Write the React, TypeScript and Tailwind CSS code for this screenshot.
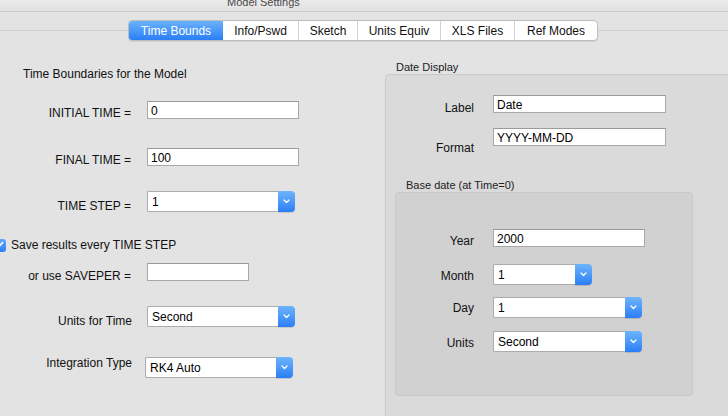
import React from "react";

function TextField({ className, value }: { className: string; value?: string }) {
  return (
    <div
      className={`h-[18px] bg-white border border-[#a9a9a9] border-t-[#9a9a9a] pl-[3px] text-[12px] leading-[18px] text-black ${className}`}
    >
      {value}
    </div>
  );
}

function Chevron() {
  return (
    <svg width="7" height="5" viewBox="0 0 7 5" fill="none">
      <path d="M1 1 L3.5 3.5 L6 1" stroke="white" strokeWidth="1.3" strokeLinecap="round" strokeLinejoin="round" />
    </svg>
  );
}

function Combo({ className, value }: { className: string; value: string }) {
  return (
    <div className={`flex h-[21px] ${className}`}>
      <div className="flex-1 bg-white border-y border-l border-[#acacac] rounded-l-[2px] pl-[4px] text-[12px] leading-[21px] text-black">
        {value}
      </div>
      <div className="w-[17px] rounded-r-[4px] bg-gradient-to-b from-[#6db4fb] to-[#2b7ef6] flex items-center justify-center shadow-[0_1px_0_rgba(0,0,0,0.12)]">
        <Chevron />
      </div>
    </div>
  );
}

const tabs = [
  { label: "Time Bounds", w: "w-[94px]", active: true },
  { label: "Info/Pswd", w: "w-[75px]" },
  { label: "Sketch", w: "w-[59px]" },
  { label: "Units Equiv", w: "w-[83px]" },
  { label: "XLS Files", w: "w-[74px]" },
  { label: "Ref Modes", w: "w-[83px]" },
];

export default function App() {
  return (
    <div
      className="w-[728px] h-[416px] overflow-hidden bg-[#e3e3e3] text-[#111]"
      style={{ fontFamily: '"Liberation Sans", Arial, sans-serif' }}
    >
      {/* title bar */}
      <div className="h-[12px] border-b border-[#cbcbcb] bg-gradient-to-b from-[#ebebeb] to-[#e2e2e2] overflow-hidden flex">
        <div className="ml-[227px] -mt-[4px] text-[11px] leading-[12px] text-[#4a4a4a]">Model Settings</div>
      </div>

      {/* tabs */}
      <div className="flex items-center pt-[8px]">
        <div className="w-[128px] h-px bg-[#d0d0d0]" />
        <div className="flex h-[21px] rounded-[4px] border border-[#bdbdbd] bg-white overflow-hidden shadow-[0_1px_1px_rgba(0,0,0,0.08)]">
          {tabs.map((t, i) => (
            <div
              key={t.label}
              className={`${t.w} flex items-center justify-center text-[12px] leading-[14px] ${
                t.active
                  ? "bg-gradient-to-b from-[#6ab2fb] to-[#2a7ef5] text-white"
                  : "text-[#111]"
              } ${i > 1 ? "border-l border-[#d3d3d3]" : ""}`}
            >
              {t.label}
            </div>
          ))}
        </div>
        <div className="flex-1 h-px bg-[#d0d0d0]" />
      </div>

      {/* main */}
      <div className="flex">
        {/* left column */}
        <div className="w-[385px] shrink-0 flex flex-col text-[12px] leading-[14px]">
          <div className="mt-[26px] ml-[23px]">Time Boundaries for the Model</div>

          <div className="mt-[20px] h-[18px] flex items-start">
            <div className="w-[131px] text-right mt-[5px]">INITIAL TIME =</div>
            <TextField className="ml-[16px] w-[152px]" value="0" />
          </div>

          <div className="mt-[29px] h-[18px] flex items-start">
            <div className="w-[131px] text-right mt-[5px]">FINAL TIME =</div>
            <TextField className="ml-[16px] w-[152px]" value="100" />
          </div>

          <div className="mt-[25px] h-[21px] flex items-start">
            <div className="w-[131px] text-right mt-[8px]">TIME STEP =</div>
            <Combo className="ml-[16px] w-[148px]" value="1" />
          </div>

          <div className="mt-[26px] h-[14px] flex items-center">
            <div className="-ml-[7px] w-[13px] h-[13px] rounded-[3px] bg-gradient-to-b from-[#5ea9fa] to-[#2b7ef5] flex items-center justify-center">
              <svg width="9" height="8" viewBox="0 0 9 8" fill="none">
                <path d="M1.5 4.2 L3.6 6.3 L7.6 1.5" stroke="white" strokeWidth="1.6" strokeLinecap="round" strokeLinejoin="round" />
              </svg>
            </div>
            <div className="ml-[5px]">Save results every TIME STEP</div>
          </div>

          <div className="mt-[11px] h-[18px] flex items-start">
            <div className="w-[131px] text-right mt-[6px]">or use SAVEPER =</div>
            <TextField className="ml-[16px] w-[102px]" />
          </div>

          <div className="mt-[25px] h-[21px] flex items-start">
            <div className="w-[132px] text-right mt-[8px]">Units for Time</div>
            <Combo className="ml-[15px] w-[148px]" value="Second" />
          </div>

          <div className="mt-[30px] h-[21px] flex items-start">
            <div className="w-[132px] text-right -mt-[1px]">Integration Type</div>
            <Combo className="ml-[13px] w-[148px]" value="RK4 Auto" />
          </div>
        </div>

        {/* right column */}
        <div className="flex-1 min-w-0 flex flex-col">
          <div className="mt-[20px] ml-[11px] text-[11px] leading-[13px] text-[#222]">Date Display</div>
          <div className="w-[360px] h-[360px] shrink-0 bg-[#dadada] border border-[#cacaca] rounded-tl-[4px] flex flex-col text-[12px] leading-[14px]">
            <div className="mt-[20px] h-[18px] flex items-start">
              <div className="w-[88px] text-right mt-[6px]">Label</div>
              <TextField className="ml-[19px] w-[173px]" value="Date" />
            </div>
            <div className="mt-[15px] h-[18px] flex items-start">
              <div className="w-[88px] text-right mt-[13px]">Format</div>
              <TextField className="ml-[19px] w-[173px]" value="YYYY-MM-DD" />
            </div>

            <div className="mt-[33px] ml-[20px] text-[11px] leading-[13px] text-[#222]">Base date (at Time=0)</div>
            <div className="ml-[9px] w-[298px] h-[204px] bg-[#d1d1d1] border border-[#c8c8c8] rounded-[4px] flex flex-col">
              <div className="mt-[36px] h-[18px] flex items-start">
                <div className="w-[78px] text-right mt-[5px]">Year</div>
                <TextField className="ml-[19px] w-[152px]" value="2000" />
              </div>
              <div className="mt-[17px] h-[21px] flex items-start">
                <div className="w-[78px] text-right mt-[5px]">Month</div>
                <Combo className="ml-[19px] w-[99px]" value="1" />
              </div>
              <div className="mt-[12px] h-[21px] flex items-start">
                <div className="w-[78px] text-right mt-[4px]">Day</div>
                <Combo className="ml-[19px] w-[149px]" value="1" />
              </div>
              <div className="mt-[13px] h-[21px] flex items-start">
                <div className="w-[78px] text-right mt-[5px]">Units</div>
                <Combo className="ml-[19px] w-[149px]" value="Second" />
              </div>
            </div>
          </div>
        </div>
      </div>
    </div>
  );
}
